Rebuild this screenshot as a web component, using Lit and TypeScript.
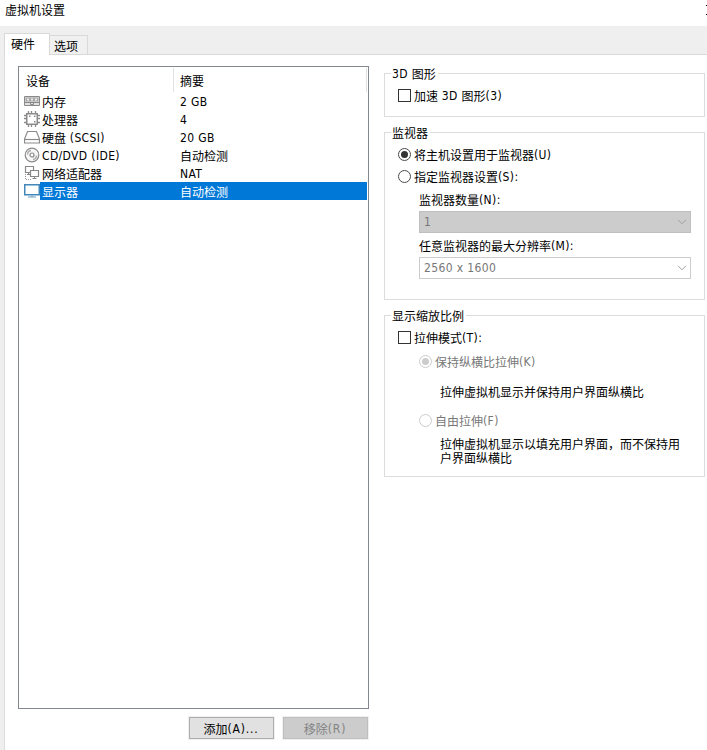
import { LitElement, html, svg, css } from "lit";
import { customElement, property } from "lit/decorators.js";

const icons: Record<string, unknown> = {
  memory: svg`<path d="M.5 3.500h15v9H.5z" fill="#e2e2e2" stroke="#8a8a8a"/><path d="M1.500 4.500h13v4h-13z" fill="#a8a8a8"/><path d="M3 5.500h2v2H3zM7 5.500h2v2H7zM11 5.500h2v2h-2z" fill="#ececec"/><path d="M1 9.500h14" stroke="#8a8a8a"/><path d="M6.500 10v1.500h3V10" fill="none" stroke="#8a8a8a"/>`,
  cpu: svg`<rect x="2.750" y="2.750" width="10.500" height="10.500" fill="#fff" stroke="#8a8a8a" stroke-width="1.500"/><path d="M4.500 0v2M7.500 0v2M11.500 0v2M4.500 14v2M7.500 14v2M11.500 14v2M0 4.500h2M0 7.500h2M0 11.500h2M14 4.500h2M14 7.500h2M14 11.500h2" stroke="#8b8b8b" stroke-width="1.300"/><path d="M5 4.500h1.500V6H5zM10 4.500h1.500V6H10zM10 10h1.500v1.500H10z" fill="#888"/>`,
  disk: svg`<path d="M3.500 2.500h9l3 7.500v4H.5v-4z" fill="#fff" stroke="#8a8a8a" stroke-width="1.200"/><path d="M1 10.500h14" stroke="#8a8a8a" stroke-width="1.200"/>`,
  cd: svg`<circle cx="8" cy="8" r="6.800" fill="#f6f6f6" stroke="#8a8a8a" stroke-width="1.200"/><circle cx="8" cy="8" r="2" fill="#fff" stroke="#888" stroke-width="1.200"/><path d="M3.500 7.500A4.200 4.200 0 0 1 7 3.500M12.500 8.500A4.200 4.200 0 0 1 9 12.500" fill="none" stroke="#b0b0b0" stroke-width="1.500"/>`,
  net: svg`<path d="M1.500 1.500h8v6h-8zM4.500 8v2M3 9.500h3" fill="none" stroke="#8a8a8a" stroke-width="1.200"/><path d="M6.500 5.500h8v6h-8z" fill="#fff" stroke="#858585" stroke-width="1.200"/><path d="M10.500 12v2M8.500 13.500h4" stroke="#858585"/><path d="M1.500 9v5.500H8" fill="none" stroke="#999" stroke-dasharray="1 1"/>`,
  display: svg`<path d="M.75 1.750h14.500v10H.75z" fill="#fff" stroke="#4288b9" stroke-width="1.500"/><path d="M8 12.500v1M4 14h8" stroke="#6a9fc4" stroke-width="1.200"/>`,
};

const chevron = html`<svg width="10" height="6" viewBox="0 0 10 6"><path d="M1 .8l4 4 4-4" fill="none" stroke="#a0a0a0"/></svg>`;

@customElement("ui-text")
class UiText extends LitElement {
  @property() text = "";
  static styles = css`
    :host { display: inline-block; white-space: pre; }
    .latin { letter-spacing: var(--track, .37px); }
    .han { vertical-align: -1px; line-height: 1; }
  `;
  render() {
    return this.text
      .split(/([\x20-\x7e]+)/)
      .filter(Boolean)
      .map((s) => html`<span class=${/^[\x20-\x7e]/.test(s) ? "latin" : "han"}>${s}</span>`);
  }
}

@customElement("ui-group")
class UiGroup extends LitElement {
  @property() heading = "";
  static styles = css`
    :host { display: block; box-sizing: border-box; border: 1px solid #dcdcdc; }
    .legend { display: block; width: max-content; height: 16px; line-height: 16px; margin: -8px 0 0 6px; padding: 0 2px 0 1px; background: #fff; }
  `;
  render() {
    return html`<div class="legend"><ui-text .text=${this.heading}></ui-text></div><slot></slot>`;
  }
}

@customElement("app-root")
class AppRoot extends LitElement {
  static styles = css`
    :host { display: flex; flex-direction: column; height: 750px; overflow: hidden; background: #efefef; color: #000;
      font: 12px/18px "DejaVu Sans Condensed", "Noto Sans CJK SC", sans-serif; }
    * { box-sizing: border-box; }
    .title { display: flex; justify-content: space-between; height: 26px; flex: none; background: #fff; padding: 1px 0 0 5px; overflow: hidden; }
    .close { flex: none; width: 10px; height: 10px; margin: 4px -9px 0 0; }
    .tabs { display: flex; align-items: flex-end; height: 29px; flex: none; padding-left: 4px; }
    .tab { border: 1px solid #d9d9d9; border-bottom: 0; height: 22px; width: 46px; background: #fff; padding: 1px 0 0 6px; }
    .tab.off { height: 20px; width: 38px; border-left: 0; border-bottom: 1px solid #d9d9d9; background: #f0f0f0; padding: 1px 0 0 4px; }
    .rest { flex: 1; border-bottom: 1px solid #d9d9d9; }
    .pane { display: flex; flex: 1; margin-left: 4px; border-left: 1px solid #dcdcdc; background: #fff; padding: 11px 2px 0 13px; }
    .left { width: 351px; flex: none; }
    .list { height: 643px; border: 1px solid #828790; padding: 1px; }
    .head { display: flex; height: 24px; line-height: 27px; }
    .head div { border-right: 1px solid #e2e2e2; padding-left: 6px; }
    .h1 { width: 154px; }
    .h2 { flex: 1; }
    .row { display: flex; height: 18px; padding-left: 4px; }
    .icon { width: 16px; height: 16px; margin-top: 1px; flex: none; }
    .cells { display: flex; flex: 1; line-height: 20px; padding-left: 2px; }
    .selected { background: #0078d7; color: #fff; }
    .name { width: 138px; flex: none; }
    .buttons { display: flex; justify-content: flex-end; gap: 9px; padding: 8px 1px 0 0; }
    .btn { --track: .8px; width: 85px; height: 22px; border: 1px solid #adadad; outline: 1px solid #f0f0f0; background: #e1e1e1; text-align: center; line-height: 22px; padding-right: 1px; }
    .btn.off { background: #ccc; border-color: #bfbfbf; color: #838383; }
    .right { flex: 1; margin: 7px 0 0 15px; }
    ui-group { width: 321px; }
    .g1 { height: 44px; }
    .g2 { height: 168px; margin-top: 15px; }
    .g3 { height: 162px; margin-top: 15px; }
    .opt { display: flex; align-items: center; height: 22px; gap: 3px; margin-left: 13px; }
    .box { width: 13px; height: 13px; border: 1px solid #333; flex: none; margin-bottom: 2px; }
    .radio { display: flex; align-items: center; justify-content: center; width: 13px; height: 13px; border: 1px solid #4a4a4a; border-radius: 50%; flex: none; margin-bottom: 2px; }
    .dot::after { content: ""; width: 7px; height: 7px; border-radius: 50%; background: #333; }
    .first { margin-top: 3px; }
    .dim { color: #777; margin-left: 34px; }
    .dim .radio { border-color: #ccc; }
    .dim .dot::after { background: #ccc; }
    .label { margin-left: 34px; height: 24px; line-height: 26px; }
    .up { margin-top: -1px; }
    .combo { display: flex; align-items: center; justify-content: space-between; width: 272px; height: 22px; margin-left: 34px; border: 1px solid #ccc; padding: 0 3px 0 4px; color: #777; }
    .combo.fill { background: #ccc; border-color: #bfbfbf; }
    .combo ui-text { margin-top: -1px; }
    .fill ui-text { margin-top: 0; }
    .note { margin-left: 55px; width: 244px; line-height: 14px; }
    .n1 { margin-top: 12px; }
    .n2 { margin-top: 5px; }
    .k { margin-top: 2px; }
    .f { margin-top: 11px; }
  `;

  rows = [
    ["memory", "内存", "2 GB"],
    ["cpu", "处理器", "4"],
    ["disk", "硬盘 (SCSI)", "20 GB"],
    ["cd", "CD/DVD (IDE)", "自动检测"],
    ["net", "网络适配器", "NAT"],
    ["display", "显示器", "自动检测"],
  ];

  t(text: string) {
    return html`<ui-text .text=${text}></ui-text>`;
  }

  render() {
    return html`
      <div class="title">${this.t("虚拟机设置")}
        <svg class="close" viewBox="0 0 10 10"><path d="M0 0l10 10M10 0L0 10" stroke="#000"/></svg>
      </div>
      <div class="tabs">
        <div class="tab">${this.t("硬件")}</div>
        <div class="tab off">${this.t("选项")}</div>
        <div class="rest"></div>
      </div>
      <div class="pane">
        <div class="left">
          <div class="list">
            <div class="head"><div class="h1">${this.t("设备")}</div><div class="h2">${this.t("摘要")}</div></div>
            ${this.rows.map(([icon, name, value]) => html`
              <div class="row">
                <svg class="icon" viewBox="0 0 16 16">${icons[icon]}</svg>
                <div class="cells ${icon === "display" ? "selected" : ""}">
                  <div class="name">${this.t(name)}</div>${this.t(value)}
                </div>
              </div>`)}
          </div>
          <div class="buttons">
            <div class="btn">${this.t("添加(A)...")}</div>
            <div class="btn off">${this.t("移除(R)")}</div>
          </div>
        </div>
        <div class="right">
          <ui-group class="g1" .heading=${"3D 图形"}>
            <div class="opt first"><span class="box"></span>${this.t("加速 3D 图形(3)")}</div>
          </ui-group>
          <ui-group class="g2" .heading=${"监视器"}>
            <div class="opt first"><span class="radio dot"></span>${this.t("将主机设置用于监视器(U)")}</div>
            <div class="opt"><span class="radio"></span>${this.t("指定监视器设置(S):")}</div>
            <div class="label up">${this.t("监视器数量(N):")}</div>
            <div class="combo fill">${this.t("1")}${chevron}</div>
            <div class="label">${this.t("任意监视器的最大分辨率(M):")}</div>
            <div class="combo">${this.t("2560 x 1600")}${chevron}</div>
          </ui-group>
          <ui-group class="g3" .heading=${"显示缩放比例"}>
            <div class="opt first"><span class="box"></span>${this.t("拉伸模式(T):")}</div>
            <div class="opt dim k"><span class="radio dot"></span>${this.t("保持纵横比拉伸(K)")}</div>
            <div class="note n1">${this.t("拉伸虚拟机显示并保持用户界面纵横比")}</div>
            <div class="opt dim f"><span class="radio"></span>${this.t("自由拉伸(F)")}</div>
            <div class="note n2">${this.t("拉伸虚拟机显示以填充用户界面，而不保持用\n户界面纵横比")}</div>
          </ui-group>
        </div>
      </div>`;
  }
}
